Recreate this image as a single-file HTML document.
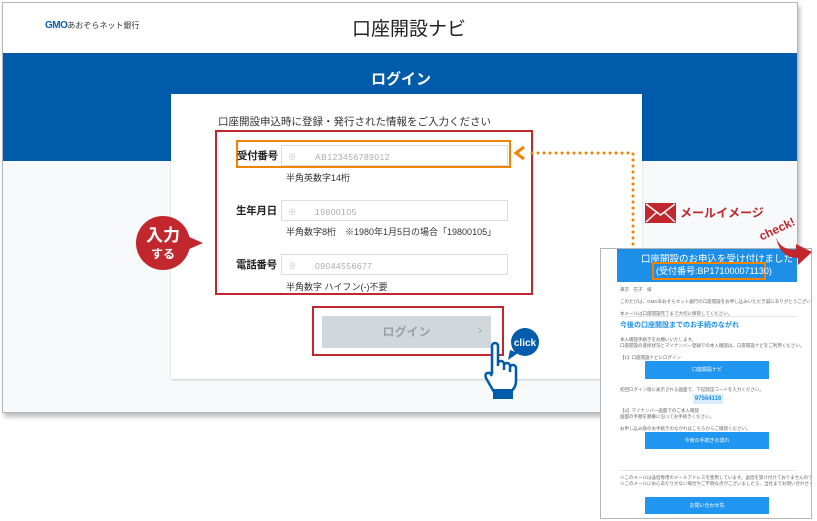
<!DOCTYPE html>
<html><head><meta charset="utf-8"><style>
*{margin:0;padding:0;box-sizing:border-box}
body{width:817px;height:521px;background:#fff;position:relative;overflow:hidden;font-family:"Liberation Sans","Noto Sans CJK JP",sans-serif;color:#333}
.a{position:absolute}
.win{left:2px;top:2px;width:796px;height:411px;border:1px solid #b5b5b5;background:#f7f9fb;box-shadow:2px 4px 4px rgba(0,0,0,.25);overflow:hidden}
.lbl{font-size:10.5px;font-weight:bold;color:#222;white-space:nowrap;letter-spacing:-.3px}
.inp{border:1px solid #d9dde0;background:#fff;height:21px;width:227px;font-size:8.5px;color:#aaa;padding:5px 0 0 6px;letter-spacing:.5px}
.inp b{font-weight:normal;color:#bbb;margin-right:18px}
.hint{font-size:9px;color:#333;white-space:nowrap}
.ms{font-size:4.5px;color:#666;white-space:nowrap;line-height:6px}
.mb{background:#2196f0;color:#fff;font-size:5px;text-align:center;line-height:18px}
.panel{left:600px;top:248px;width:212px;height:271px;border:1px solid #b5b5b5;background:#fff;overflow:hidden}
.panel .a{position:absolute}
</style></head><body>
<div class="a win">
  <div class="a" style="left:0;top:0;width:796px;height:50px;background:#fff"></div>
  <div class="a" style="left:42px;top:17px;font-size:10px;white-space:nowrap"><span style="color:#0a5fb4;font-weight:bold;letter-spacing:-.5px">GMO</span><span style="font-size:8px;color:#333">あおぞらネット銀行</span></div>
  <div class="a" style="left:349px;top:11px;font-size:19px;color:#222;white-space:nowrap">口座開設ナビ</div>
  <div class="a" style="left:0;top:50px;width:796px;height:108px;background:#005bab"></div>
  <div class="a" style="left:0;top:65px;width:796px;text-align:center;color:#fff;font-weight:bold;font-size:15px">ログイン</div>
  <div class="a" style="left:168px;top:91px;width:471px;height:285px;background:#fff;box-shadow:0 1px 2px rgba(0,0,0,.2)"></div>
</div>
<div class="a" style="left:218px;top:114px;font-size:10.5px;color:#333;white-space:nowrap">口座開設申込時に登録・発行された情報をご入力ください</div>
<div class="a" style="left:215px;top:130px;width:318px;height:165px;border:2px solid #c1272d"></div>
<div class="a" style="left:236px;top:140px;width:275px;height:28px;border:2px solid #f08300"></div>
<div class="a lbl" style="left:237px;top:148px">受付番号</div>
<div class="a inp" style="left:281px;top:145px"><b>※</b>AB123456789012</div>
<div class="a hint" style="left:286px;top:171px">半角英数字14桁</div>
<div class="a lbl" style="left:236px;top:203px">生年月日</div>
<div class="a inp" style="left:281px;top:200px"><b>※</b>19800105</div>
<div class="a hint" style="left:286px;top:225px">半角数字8桁　※1980年1月5日の場合「19800105」</div>
<div class="a lbl" style="left:236px;top:257px">電話番号</div>
<div class="a inp" style="left:281px;top:254px"><b>※</b>09044556677</div>
<div class="a hint" style="left:286px;top:280px">半角数字 ハイフン(-)不要</div>
<div class="a" style="left:312px;top:306px;width:192px;height:50px;border:2px solid #c1272d"></div>
<div class="a" style="left:322px;top:316px;width:169px;height:32px;background:#d0d8dd;color:#9aa3a8;font-size:12px;font-weight:bold;text-align:center;line-height:32px">ログイン</div>
<div class="a" style="left:478px;top:323px;color:#9aa3a8;font-size:12px">›</div>
<svg class="a" style="left:135px;top:214px" width="75" height="60"><path d="M52 22 L68 29 L52 36Z" fill="#c1272d"/><circle cx="28" cy="29" r="27" fill="#c1272d"/><text x="28" y="27" fill="#fff" font-size="17" font-weight="bold" text-anchor="middle" font-family="Noto Sans CJK JP">入力</text><text x="28" y="44" fill="#fff" font-size="12" font-weight="bold" text-anchor="middle" font-family="Noto Sans CJK JP">する</text></svg>
<svg class="a" style="left:480px;top:326px" width="60" height="80"><path d="M30 24 L28 34 L38 27Z" fill="#005bab"/><circle cx="45" cy="16" r="14" fill="#005bab"/><text x="45" y="20" fill="#fff" font-size="10" font-weight="bold" text-anchor="middle">click</text>
<path d="M12 48 V20 a3 3 0 0 1 6 0 V40 M18 38 a3 3 0 0 1 6 0 V44 M24 40 a3 3 0 0 1 6 0 V46 M30 42 a3 3 0 0 1 6 0 V55 Q36 62 30 66 H14 L6 52 Q4 46 10 47 L12 50" fill="#fff" stroke="#005bab" stroke-width="2.5" stroke-linejoin="round"/><rect x="13" y="63" width="20" height="10" fill="#005bab"/></svg>
<svg class="a" style="left:510px;top:145px" width="150" height="140"><path d="M14 2 L6 8 L14 14" fill="none" stroke="#f08300" stroke-width="3"/><path d="M22 8 H123 V125 H142" fill="none" stroke="#f08300" stroke-width="3" stroke-dasharray="0 6" stroke-linecap="round"/></svg>
<svg class="a" style="left:645px;top:203px" width="31" height="20"><rect width="31" height="20" fill="#c1272d"/><path d="M1 1 L15.5 12 L30 1 M1 19 L12 9 M30 19 L19 9" stroke="#fff" stroke-width="1.5" fill="none"/></svg>
<div class="a" style="left:680px;top:204px;color:#c1272d;font-weight:bold;font-size:12px;white-space:nowrap">メールイメージ</div>
<div class="a panel">
  <div class="a" style="left:16px;top:0;width:180px;height:33px;background:#1e8fe6"></div>
  <div class="a" style="left:40px;top:2px;color:#fff;font-size:9.5px;white-space:nowrap">口座開設のお申込を受け付けました</div>
  <div class="a" style="left:51px;top:13px;width:114px;height:18px;border:2px solid #f08300;color:#fff;font-size:9px;white-space:nowrap;padding-left:2px;line-height:14px">(受付番号:BP171000071130)</div>
  <div class="a ms" style="left:19px;top:38px">東京　花子　様<br><br>このたびは、GMOあおぞらネット銀行の口座開設をお申し込みいただき誠にありがとうございます。<br><br>本メールは口座開設完了まで大切に保管してください。</div>
  <div class="a" style="left:18px;top:67px;width:178px;border-top:1px solid #e5e5e5"></div>
  <div class="a" style="left:19px;top:71px;color:#1e8fe6;font-weight:bold;font-size:7px;white-space:nowrap">今後の口座開設までのお手続のながれ</div>
  <div class="a ms" style="left:19px;top:88px">本人確認手続きをお願いいたします。<br>口座開設の進捗状況とマイナンバー登録での本人確認は、口座開設ナビをご利用ください。<br><br>【1】口座開設ナビにログイン</div>
  <div class="a mb" style="left:44px;top:112px;width:124px;height:18px">口座開設ナビ</div>
  <div class="a ms" style="left:19px;top:138px">初回ログイン後に表示される画面で、下記認証コードを入力ください。</div>
  <div class="a" style="left:92px;top:145px;width:30px;height:10px;background:#d9ecfb;color:#1e8fe6;font-size:6px;font-weight:bold;text-align:center;line-height:10px">97564116</div>
  <div class="a ms" style="left:19px;top:159px">【2】マイナンバー画面でのご本人確認<br>画面の手順を順番に沿ってお手続きください。<br><br>お申し込み後のお手続きのながれはこちらからご確認ください。</div>
  <div class="a mb" style="left:44px;top:183px;width:124px;height:17px">今後の手続きの流れ</div>
  <div class="a" style="left:18px;top:221px;width:178px;border-top:1px solid #e5e5e5"></div>
  <div class="a ms" style="left:19px;top:226px">※このメールは送信専用のメールアドレスを使用しています。返信を受け付けておりませんのでご了承ください。<br>※このメールにお心あたりがない場合やご不明な点がございましたら、当社までお問い合わせください。</div>
  <div class="a mb" style="left:44px;top:248px;width:124px;height:17px">お問い合わせ先</div>
</div>
<div class="a" style="left:758px;top:222px;color:#c1272d;font-weight:bold;font-size:12px;transform:rotate(-25deg);white-space:nowrap">check!</div>
<svg class="a" style="left:768px;top:232px" width="50" height="35"><path d="M8 5 Q12 18 28 18 L28 12 L44 20 L30 33 L30 26 Q12 26 8 5Z" fill="#c1272d"/></svg>
</body></html>
